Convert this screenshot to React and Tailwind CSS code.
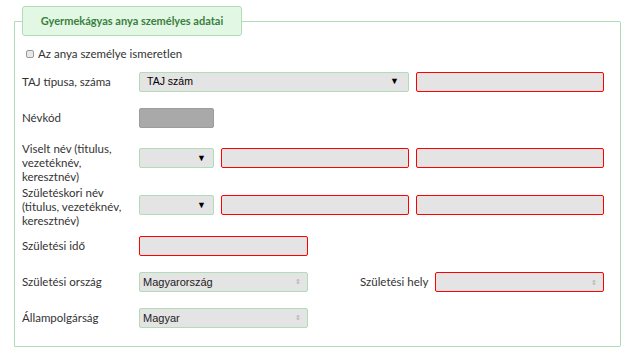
export default function App() {
  const inputRed = "h-5 rounded-[2px] border border-[#ff0000] bg-[#e4e4e4]";
  const selectGreen = "h-5 rounded-[2px] border border-[#b0dcb6] bg-[#e4e4e4] flex items-center";

  return (
    <div className="w-[634px] h-[349px] bg-white font-['Lato',sans-serif] text-[11.5px] text-[#333]">
      <div className="pl-[14px] pt-[6px]">
        <fieldset className="w-[607px] h-[341px] border border-[#b0dcb6] rounded-r-[2px] px-[7px] pb-0">
          <legend className="h-[30px] w-[220px] rounded-[3px] border border-[#b0dcb6] bg-[#e3f7e5] text-[11px] font-bold text-[#3a7f3e] leading-[28px] whitespace-nowrap">
            <span className="block text-center">Gyermekágyas anya személyes adatai</span>
          </legend>

          {/* ismeretlen */}
          <label className="mt-[11px] flex h-[14px] items-center gap-[4px] pl-[4px]">
            <span className="h-[8px] w-[8px] rounded-[2px] border border-[#9a9a9a] bg-[#e8e8e8]"></span>
            <span className="leading-[14px]">Az anya személye ismeretlen</span>
          </label>

          {/* TAJ */}
          <div className="mt-[11px] flex items-center">
            <div className="w-[117px]">TAJ típusa, száma</div>
            <div className={selectGreen + " w-[270px] justify-between pl-[7px] pr-[9px] font-['Liberation_Sans',sans-serif] text-[10.5px] text-black"}>
              <span>TAJ szám</span>
              <span className="text-[9px]">▼</span>
            </div>
            <div className={inputRed + " ml-[7px] w-[188px]"}></div>
          </div>

          {/* Névkód */}
          <div className="mt-[16px] flex items-center">
            <div className="w-[117px]">Névkód</div>
            <div className="h-5 w-[75px] rounded-[2px] border border-[#9c9c9c] bg-[#a9a9a9]"></div>
          </div>

          {/* Viselt név */}
          <div className="mt-[14px] flex items-start">
            <div className="w-[117px] leading-[14px]">
              Viselt név (titulus,<br />vezetéknév,<br />keresztnév)
            </div>
            <div className={selectGreen + " mt-[6px] w-[75px] justify-end px-[7px] text-[9px] text-black"}>▼</div>
            <div className={inputRed + " mt-[6px] ml-[7px] w-[188px]"}></div>
            <div className={inputRed + " mt-[6px] ml-[7px] w-[188px]"}></div>
          </div>

          {/* Születéskori név */}
          <div className="mt-[2px] flex items-start">
            <div className="w-[117px] leading-[14px]">
              Születéskori név<br />(titulus, vezetéknév,<br />keresztnév)
            </div>
            <div className={selectGreen + " mt-[9px] w-[75px] justify-end px-[7px] text-[9px] text-black"}>▼</div>
            <div className={inputRed + " mt-[9px] ml-[7px] w-[188px]"}></div>
            <div className={inputRed + " mt-[9px] ml-[7px] w-[188px]"}></div>
          </div>

          {/* Születési idő */}
          <div className="mt-[8px] flex items-center">
            <div className="w-[117px]">Születési idő</div>
            <div className={inputRed + " w-[169px]"}></div>
          </div>

          {/* Születési ország / hely */}
          <div className="mt-[16px] flex items-center">
            <div className="w-[117px]">Születési ország</div>
            <div className={selectGreen + " w-[169px] justify-between pl-[3px] pr-[6px] font-['Liberation_Sans',sans-serif] text-[11px] text-[#222]"}>
              <span>Magyarország</span>
              <span className="text-[7px] text-[#aaa]">⇕</span>
            </div>
            <div className="ml-[52px] w-[75px] whitespace-nowrap">Születési hely</div>
            <div className="h-5 w-[169px] rounded-[2px] border border-[#ff0000] bg-[#e4e4e4] flex items-center justify-end pr-[6px]">
              <span className="text-[7px] text-[#aaa]">⇕</span>
            </div>
          </div>

          {/* Állampolgárság */}
          <div className="mt-[16px] flex items-center">
            <div className="w-[117px]">Állampolgárság</div>
            <div className={selectGreen + " w-[169px] justify-between pl-[3px] pr-[6px] font-['Liberation_Sans',sans-serif] text-[11px] text-[#222]"}>
              <span>Magyar</span>
              <span className="text-[7px] text-[#aaa]">⇕</span>
            </div>
          </div>
        </fieldset>
      </div>
    </div>
  );
}
